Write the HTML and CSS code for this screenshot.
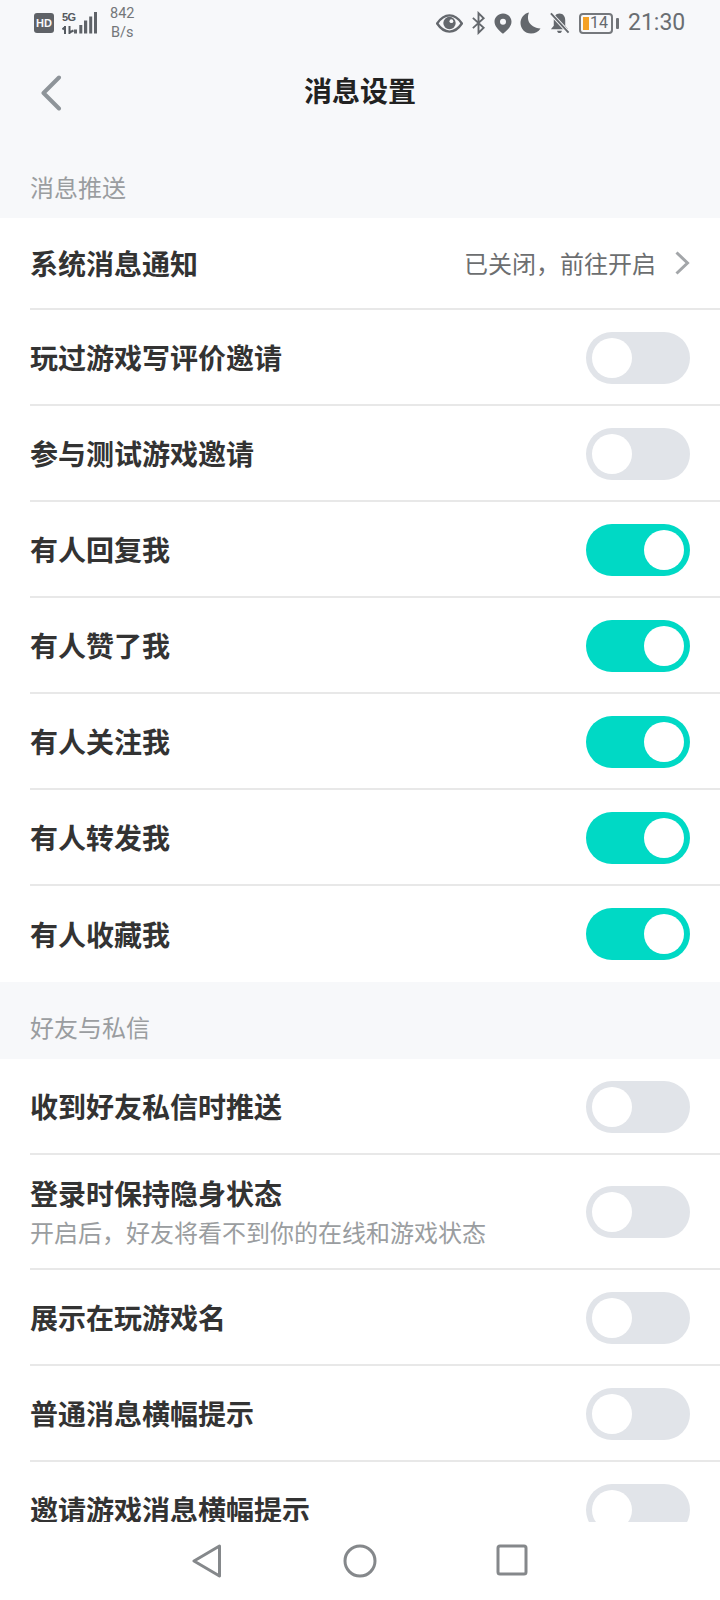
FILE: index.html
```html
<!DOCTYPE html>
<html lang="zh-CN">
<head>
<meta charset="utf-8">
<title>消息设置</title>
<link rel="stylesheet" href="styles.css">
</head>
<body>
<div class="screen">
  <div class="main">
    <div class="status">
      <div class="status-left">
        <span class="hd">HD</span>
        <div class="net">
          <span class="fiveg">5G</span>
          <svg class="arrows" width="13" height="8" viewBox="0 0 13 8"><path d="M3 0V8M0.500 3.500L3 1M7.500 0V8M7.500 6.500L11.500 4.500" fill="none" stroke="#555a60" stroke-width="2"/></svg>
        </div>
        <svg class="signal" width="23" height="22" viewBox="0 0 23 22"><g fill="#5f6368"><rect x="0" y="17.500" width="3" height="4"/><rect x="5.300" y="13" width="3" height="8.500"/><rect x="10" y="8.500" width="3.200" height="13"/><rect x="15.200" y="4.500" width="3" height="17"/><rect x="20" y="0" width="3" height="21.500"/></g></svg>
        <div class="speed"><span>842</span><span>B/s</span></div>
      </div>
      <div class="status-right">
        <svg width="27" height="19" viewBox="0 0 28 20"><path d="M1 10C5 4 9 1.500 14 1.500S23 4 27 10C23 16 19 18.500 14 18.500S5 16 1 10Z" fill="none" stroke="#64686d" stroke-width="2.500"/><circle cx="14" cy="9.500" r="6.500" fill="#64686d"/><circle cx="16" cy="7.500" r="2" fill="#f7f8fa"/></svg>
        <svg width="15" height="24" viewBox="0 0 16 24"><path d="M2 6.500L13.500 17 8 22.500V1.500L13.500 7 2 17.500" fill="none" stroke="#64686d" stroke-width="2"/></svg>
        <svg width="18" height="21" viewBox="0 0 18 21"><path fill-rule="evenodd" d="M9 0.500C13.700 0.500 17.500 4.200 17.500 8.800 17.500 13 13.500 17.500 9 20.800 4.500 17.500 0.500 13 0.500 8.800 0.500 4.200 4.300 0.500 9 0.500ZM9 5.800A3 3 0 1 0 9 11.800 3 3 0 1 0 9 5.800Z" fill="#64686d"/></svg>
        <svg width="21" height="22" viewBox="0 0 21 22"><path d="M9 0.500C6.500 6.500 8 15 20.500 16.500 18.500 19.800 15 21.500 11 21.500 5 21.500 0.500 16.800 0.500 11 0.500 6 4 1.500 9 0.500Z" fill="#64686d"/></svg>
        <svg width="21" height="22" viewBox="0 0 22 22"><path d="M11 1C14.800 1 17 4 17 8V14L20 17.500H2L5 14V8C5 4 7.200 1 11 1ZM8.500 19H13.500C13.300 20.500 12.300 21.500 11 21.500S8.700 20.500 8.500 19Z" fill="#64686d"/><path d="M2 1L20.500 21" stroke="#f7f8fa" stroke-width="4"/><path d="M2 1L20.500 21" stroke="#64686d" stroke-width="2"/></svg>
        <div class="battery-wrap">
          <div class="battery"><span class="level"></span><span class="battery-num">14</span></div>
          <span class="battery-tip"></span>
        </div>
        <span class="time">21:30</span>
      </div>
    </div>
    <header class="topbar">
      <svg class="back" width="22" height="38" viewBox="0 0 22 38"><path d="M19 4.500L3.500 20 19 35.500" fill="none" stroke="#8e9499" stroke-width="4" stroke-linecap="round" stroke-linejoin="round"/></svg>
      <h1 class="title">消息设置</h1>
    </header>

    <div class="section-label first">消息推送</div>
    <div class="group">
      <div class="row short"><span class="name">系统消息通知</span>
        <span class="link">已关闭，前往开启<svg class="chev" width="16" height="24" viewBox="0 0 16 24"><path d="M2.500 1.500L13.500 12 2.500 22.500" fill="none" stroke="#a3a6a9" stroke-width="3"/></svg></span>
      </div>
      <div class="row"><span class="name">玩过游戏写评价邀请</span><span class="toggle"><i></i></span></div>
      <div class="row"><span class="name">参与测试游戏邀请</span><span class="toggle"><i></i></span></div>
      <div class="row"><span class="name">有人回复我</span><span class="toggle on"><i></i></span></div>
      <div class="row"><span class="name">有人赞了我</span><span class="toggle on"><i></i></span></div>
      <div class="row"><span class="name">有人关注我</span><span class="toggle on"><i></i></span></div>
      <div class="row"><span class="name">有人转发我</span><span class="toggle on"><i></i></span></div>
      <div class="row last"><span class="name">有人收藏我</span><span class="toggle on"><i></i></span></div>
    </div>

    <div class="section-label second">好友与私信</div>
    <div class="group">
      <div class="row"><span class="name">收到好友私信时推送</span><span class="toggle"><i></i></span></div>
      <div class="row tall"><div class="stack"><span class="name">登录时保持隐身状态</span><span class="sub">开启后，好友将看不到你的在线和游戏状态</span></div><span class="toggle"><i></i></span></div>
      <div class="row"><span class="name">展示在玩游戏名</span><span class="toggle"><i></i></span></div>
      <div class="row"><span class="name">普通消息横幅提示</span><span class="toggle"><i></i></span></div>
      <div class="row"><span class="name">邀请游戏消息横幅提示</span><span class="toggle"><i></i></span></div>
    </div>
  </div>
  <nav class="nav">
    <svg width="30" height="34" viewBox="0 0 30 34"><path d="M27.500 2L2 17 27.500 32Z" fill="none" stroke="#85888b" stroke-width="3" stroke-linejoin="round"/></svg>
    <svg width="34" height="34" viewBox="0 0 34 34"><circle cx="17" cy="17" r="15" fill="none" stroke="#85888b" stroke-width="3"/></svg>
    <svg class="nav-square" width="32" height="32" viewBox="0 0 32 32"><rect x="2" y="2" width="28" height="28" rx="2" fill="none" stroke="#85888b" stroke-width="3"/></svg>
  </nav>
</div>
</body>
</html>
```
FILE: styles.css
```css
* { box-sizing: border-box; }
html, body { margin: 0; padding: 0; }
body {
  width: 720px;
  height: 1600px;
  overflow: hidden;
  background: #fff;
  font-family: "Noto Sans CJK SC", "Noto Sans", sans-serif;
}
.screen { width: 720px; height: 1600px; display: flex; flex-direction: column; }
.main { height: 1522px; overflow: hidden; background: #f7f8fa; flex: none; }
.nav {
  height: 78px;
  flex: none;
  background: #fff;
  display: flex;
  align-items: flex-start;
  padding: 22px 0 0 192px;
  gap: 121px;
}
.nav-square { margin-left: -2px; }
.status {
  height: 46px;
  display: flex;
  justify-content: space-between;
  align-items: center;
  padding: 0 34px;
  color: #64686d;
}
.status-left { display: flex; align-items: center; }
.hd {
  width: 20px; height: 20px;
  border-radius: 3px;
  background: #5f6267;
  color: #f7f8fa;
  font: 700 11px/20px "Liberation Sans", sans-serif;
  text-align: center;
}
.net { display: flex; flex-direction: column; margin-left: 8px; width: 13px; align-items: flex-start; }
.fiveg { font: 700 11px/11px "Liberation Sans", sans-serif; color: #55595e; letter-spacing: -0.5px; }
.arrows { margin-top: 3px; }
.signal { margin-left: -1px; }
.speed {
  display: flex; flex-direction: column; align-items: center;
  margin-left: 13px;
  font: 400 14.5px/19px Roboto, sans-serif;
  color: #737679;
}
.status-right { display: flex; align-items: center; gap: 8px; }
.battery-wrap { display: flex; align-items: center; gap: 3px; margin-left: 1px; }
.battery {
  position: relative;
  width: 34px; height: 21px;
  border: 2px solid #75787c;
  border-radius: 4px;
  display: flex; align-items: center; justify-content: flex-end;
  padding-right: 3px;
}
.level { position: absolute; left: 2px; top: 2px; bottom: 2px; width: 6px; background: #f4a024; }
.battery-num { font: 400 16px/16px Roboto, sans-serif; color: #64686d; }
.battery-tip { width: 3px; height: 11px; background: #6f7276; border-radius: 1px; }
.time { font: 400 23px/28px Roboto, sans-serif; color: #6a6e72; margin-left: 1px; width: 58px; }
.topbar {
  height: 100px;
  padding-bottom: 12px;
  position: relative;
  display: flex; align-items: center; justify-content: center;
}
.back { position: absolute; left: 40px; top: 27px; }
.title { margin: 0; font-size: 28px; font-weight: 700; line-height: 40px; color: #222; }
.section-label {
  padding: 0 30px;
  font-size: 24px;
  line-height: 34px;
  color: #9a9da0;
}
.section-label.first { height: 72px; padding-top: 24px; }
.section-label.second { height: 77px; padding-top: 28px; }
.group { background: #fff; }
.row {
  height: 96px;
  margin-left: 30px;
  padding-right: 30px;
  border-bottom: 2px solid #e8e8e8;
  display: flex; align-items: center; justify-content: space-between;
}
.row.short { height: 92px; }
.row.tall { height: 115px; }
.row.last { border-bottom: 0; }
.name { font-size: 28px; font-weight: 700; line-height: 38px; color: #333; }
.stack { display: flex; flex-direction: column; gap: 3px; }
.sub { font-size: 24px; line-height: 34px; color: #9a9da0; }
.link { display: flex; align-items: center; font-size: 24px; color: #6c6e70; line-height: 34px; }
.chev { margin-left: 18px; }
.toggle {
  width: 104px; height: 52px; flex: none;
  margin-top: 2px;
  border-radius: 26px;
  background: #e1e4e9;
  padding: 6px;
  display: flex;
}
.row.last .toggle { margin-top: 0; }
.row.tall .toggle { margin-top: 1px; }
.toggle i { width: 40px; height: 40px; border-radius: 50%; background: #fff; }
.toggle.on { background: #00d9c5; justify-content: flex-end; }
```
